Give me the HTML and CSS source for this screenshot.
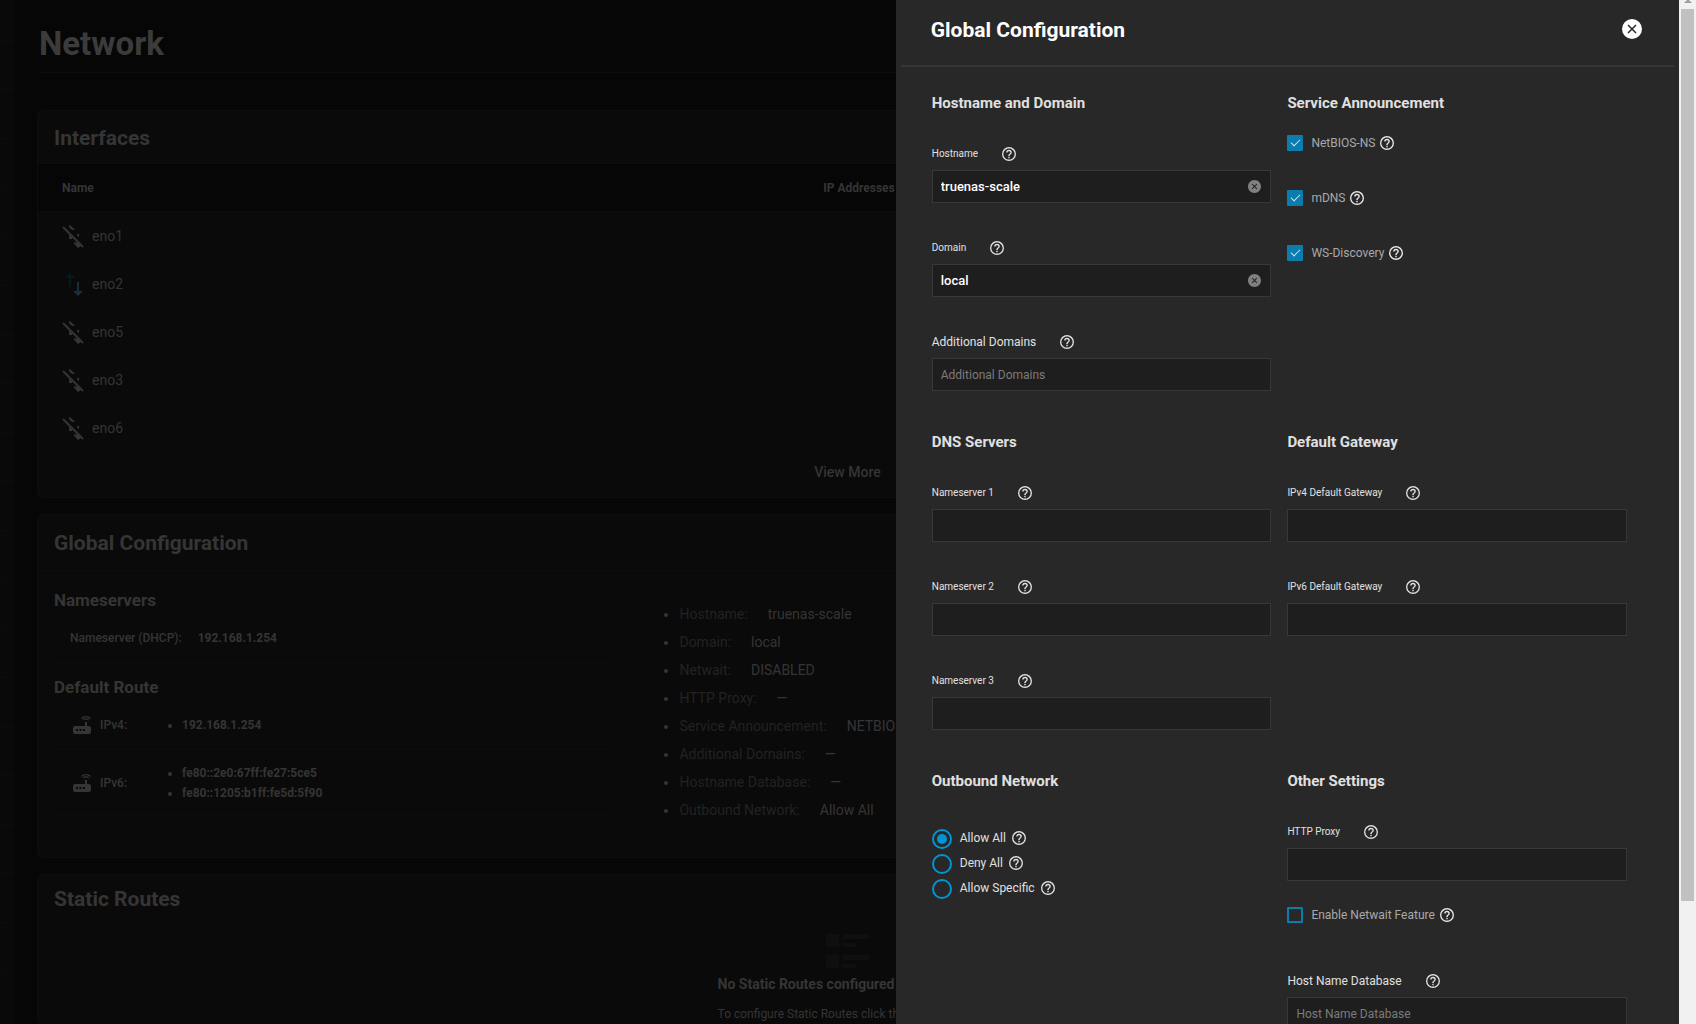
FILE: index.html
```html
<!DOCTYPE html>
<html lang="en">
<head>
    <meta charset="UTF-8">
    <meta name="viewport" content="width=device-width, initial-scale=1.0">
    <title>Network</title>
    <link rel="stylesheet" href="styles.css">
</head>
<body>
    <!-- shared icons -->
    <svg class="icon-defs" aria-hidden="true">
        <symbol id="icon-help" viewBox="2 2 20 20">
            <path d="M11,18H13V16H11V18M12,2A10,10 0 0,0 2,12A10,10 0 0,0 12,22A10,10 0 0,0 22,12A10,10 0 0,0 12,2M12,20C7.59,20 4,16.41 4,12C4,7.59 7.59,4 12,4C16.41,4 20,7.59 20,12C20,16.41 16.41,20 12,20M12,6A4,4 0 0,0 8,10H10A2,2 0 0,1 12,8A2,2 0 0,1 14,10C14,12 11,11.75 11,15H13C13,12.75 16,12.5 16,10A4,4 0 0,0 12,6Z"/>
        </symbol>
        <symbol id="icon-clear" viewBox="2 2 20 20">
            <path d="M12,2C6.47,2 2,6.47 2,12C2,17.53 6.47,22 12,22C17.53,22 22,17.53 22,12C22,6.47 17.53,2 12,2M16.3,15.3L15.3,16.3L12,13L8.7,16.3L7.7,15.3L11,12L7.7,8.7L8.7,7.7L12,11L15.3,7.7L16.3,8.7L13,12L16.3,15.3Z"/>
        </symbol>
        <symbol id="icon-link-off" viewBox="0 0 24 24">
            <path d="M8 1L13 6H10L6.5 2.5ZM7 10.5L10 13.5V15H7ZM15 10H17V13.5L15 11.5ZM11 18.5H15.5L19 22L16 24Z"/>
            <path class="slash" d="M1 3L21 23"/>
        </symbol>
        <symbol id="icon-router" viewBox="0 0 24 24">
            <path d="M20.2,5.9L21,5.1C19.6,3.7 17.8,3 16,3C14.2,3 12.4,3.7 11,5.1L11.8,5.9C13,4.8 14.5,4.2 16,4.2C17.5,4.2 19,4.8 20.2,5.9M19.3,6.7C18.4,5.8 17.2,5.3 16,5.3C14.8,5.3 13.6,5.8 12.7,6.7L13.5,7.5C14.2,6.8 15.1,6.5 16,6.5C16.9,6.5 17.8,6.8 18.5,7.5L19.3,6.7M19,13H17V9H15V13H5A2,2 0 0,0 3,15V19A2,2 0 0,0 5,21H19A2,2 0 0,0 21,19V15A2,2 0 0,0 19,13M8,18H6V16H8V18M11.5,18H9.5V16H11.5V18M15,18H13V16H15V18Z"/>
        </symbol>
    </svg>

    <div class="viewport">
        <!-- side navigation -->
        <nav class="sidenav" aria-label="Main menu"></nav>

        <!-- network page, dimmed while the panel is open -->
        <main class="page">
            <h1 class="page-title">Network</h1>

            <section class="card card-interfaces">
                <h2 class="card-title">Interfaces</h2>
                <table class="interfaces">
                    <thead>
                        <tr><th>Name</th><th>IP Addresses</th></tr>
                    </thead>
                    <tbody>
                        <tr><td><span class="iface"><svg class="icon"><use href="#icon-link-off"/></svg>eno1</span></td><td></td></tr>
                        <tr><td><span class="iface"><svg class="icon" viewBox="0 0 24 24"><path class="arrow-up" d="M8 1L3 6H7V15H9V6H13Z"/><path class="arrow-down" d="M16 24L11 19H15V10H17V19H21Z"/></svg>eno2</span></td><td></td></tr>
                        <tr><td><span class="iface"><svg class="icon"><use href="#icon-link-off"/></svg>eno5</span></td><td></td></tr>
                        <tr><td><span class="iface"><svg class="icon"><use href="#icon-link-off"/></svg>eno3</span></td><td></td></tr>
                        <tr><td><span class="iface"><svg class="icon"><use href="#icon-link-off"/></svg>eno6</span></td><td></td></tr>
                    </tbody>
                </table>
                <button class="view-more" type="button">View More</button>
            </section>

            <section class="card card-config">
                <h2 class="card-title">Global Configuration</h2>
                <div class="config">
                    <div class="config-left">
                        <h3>Nameservers</h3>
                        <div class="ns-row"><span>Nameserver (DHCP):</span><b>192.168.1.254</b></div>
                        <h3>Default Route</h3>
                        <div class="route">
                            <svg class="icon"><use href="#icon-router"/></svg>
                            <span class="route-name">IPv4:</span>
                            <ul><li>192.168.1.254</li></ul>
                        </div>
                        <div class="route route-tall">
                            <svg class="icon"><use href="#icon-router"/></svg>
                            <span class="route-name">IPv6:</span>
                            <ul><li>fe80::2e0:67ff:fe27:5ce5</li><li>fe80::1205:b1ff:fe5d:5f90</li></ul>
                        </div>
                    </div>
                    <ul class="config-list">
                        <li><span>Hostname:</span>truenas-scale</li>
                        <li><span>Domain:</span>local</li>
                        <li><span>Netwait:</span>DISABLED</li>
                        <li><span>HTTP Proxy:</span>—</li>
                        <li><span>Service Announcement:</span>NETBIOS-NS, mDNS, WS-DISCOVERY</li>
                        <li><span>Additional Domains:</span>—</li>
                        <li><span>Hostname Database:</span>—</li>
                        <li><span>Outbound Network:</span>Allow All</li>
                    </ul>
                </div>
            </section>

            <section class="card card-routes">
                <h2 class="card-title">Static Routes</h2>
                <div class="empty">
                    <svg class="empty-icon" viewBox="0 0 43 34"><path d="M0 0h13v13H0zM17 0h26v5H17zM17 9h13v4H17zM0 21h13v13H0zM17 21h26v5H17zM17 30h13v4H17z"/></svg>
                    <div class="empty-text">
                        <h3>No Static Routes configured</h3>
                        <p>To configure Static Routes click the "Add" button.</p>
                    </div>
                </div>
            </section>
        </main>

        <!-- slide-in panel -->
        <aside class="panel">
            <header class="panel-header">
                <h2>Global Configuration</h2>
                <button class="close" type="button" aria-label="Close">
                    <svg viewBox="0 0 20 20"><path d="M6 6L14 14M14 6L6 14"/></svg>
                </button>
            </header>

            <form class="panel-form">
                <fieldset>
                    <legend>Hostname and Domain</legend>
                    <div class="field">
                        <div class="field-label"><label for="hostname">Hostname</label><button class="help" type="button" aria-label="Help"><svg><use href="#icon-help"/></svg></button></div>
                        <div class="field-box">
                            <input id="hostname" type="text" value="truenas-scale">
                            <button class="clear" type="button" aria-label="Clear"><svg><use href="#icon-clear"/></svg></button>
                        </div>
                    </div>
                    <div class="field">
                        <div class="field-label"><label for="domain">Domain</label><button class="help" type="button" aria-label="Help"><svg><use href="#icon-help"/></svg></button></div>
                        <div class="field-box">
                            <input id="domain" type="text" value="local">
                            <button class="clear" type="button" aria-label="Clear"><svg><use href="#icon-clear"/></svg></button>
                        </div>
                    </div>
                    <div class="field">
                        <div class="field-label large"><label for="domains">Additional Domains</label><button class="help" type="button" aria-label="Help"><svg><use href="#icon-help"/></svg></button></div>
                        <div class="field-box"><input id="domains" type="text" placeholder="Additional Domains"></div>
                    </div>
                </fieldset>

                <fieldset>
                    <legend class="short">Service Announcement</legend>
                    <div class="check"><input id="netbios" type="checkbox" checked><label for="netbios">NetBIOS-NS</label><button class="help" type="button" aria-label="Help"><svg><use href="#icon-help"/></svg></button></div>
                    <div class="check"><input id="mdns" type="checkbox" checked><label for="mdns">mDNS</label><button class="help" type="button" aria-label="Help"><svg><use href="#icon-help"/></svg></button></div>
                    <div class="check"><input id="wsd" type="checkbox" checked><label for="wsd">WS-Discovery</label><button class="help" type="button" aria-label="Help"><svg><use href="#icon-help"/></svg></button></div>
                </fieldset>

                <fieldset>
                    <legend>DNS Servers</legend>
                    <div class="field">
                        <div class="field-label"><label for="ns1">Nameserver 1</label><button class="help" type="button" aria-label="Help"><svg><use href="#icon-help"/></svg></button></div>
                        <div class="field-box"><input id="ns1" type="text"></div>
                    </div>
                    <div class="field">
                        <div class="field-label"><label for="ns2">Nameserver 2</label><button class="help" type="button" aria-label="Help"><svg><use href="#icon-help"/></svg></button></div>
                        <div class="field-box"><input id="ns2" type="text"></div>
                    </div>
                    <div class="field">
                        <div class="field-label"><label for="ns3">Nameserver 3</label><button class="help" type="button" aria-label="Help"><svg><use href="#icon-help"/></svg></button></div>
                        <div class="field-box"><input id="ns3" type="text"></div>
                    </div>
                </fieldset>

                <fieldset>
                    <legend>Default Gateway</legend>
                    <div class="field">
                        <div class="field-label"><label for="gw4">IPv4 Default Gateway</label><button class="help" type="button" aria-label="Help"><svg><use href="#icon-help"/></svg></button></div>
                        <div class="field-box"><input id="gw4" type="text"></div>
                    </div>
                    <div class="field">
                        <div class="field-label"><label for="gw6">IPv6 Default Gateway</label><button class="help" type="button" aria-label="Help"><svg><use href="#icon-help"/></svg></button></div>
                        <div class="field-box"><input id="gw6" type="text"></div>
                    </div>
                </fieldset>

                <fieldset>
                    <legend>Outbound Network</legend>
                    <div class="radios">
                        <div class="radio"><input id="allow-all" type="radio" name="outbound" checked><label for="allow-all">Allow All</label><button class="help" type="button" aria-label="Help"><svg><use href="#icon-help"/></svg></button></div>
                        <div class="radio"><input id="deny-all" type="radio" name="outbound"><label for="deny-all">Deny All</label><button class="help" type="button" aria-label="Help"><svg><use href="#icon-help"/></svg></button></div>
                        <div class="radio"><input id="allow-specific" type="radio" name="outbound"><label for="allow-specific">Allow Specific</label><button class="help" type="button" aria-label="Help"><svg><use href="#icon-help"/></svg></button></div>
                    </div>
                </fieldset>

                <fieldset>
                    <legend>Other Settings</legend>
                    <div class="field tight">
                        <div class="field-label"><label for="proxy">HTTP Proxy</label><button class="help" type="button" aria-label="Help"><svg><use href="#icon-help"/></svg></button></div>
                        <div class="field-box"><input id="proxy" type="text"></div>
                    </div>
                    <div class="check netwait"><input id="netwait" type="checkbox"><label for="netwait">Enable Netwait Feature</label><button class="help" type="button" aria-label="Help"><svg><use href="#icon-help"/></svg></button></div>
                    <div class="field">
                        <div class="field-label large"><label for="hosts">Host Name Database</label><button class="help" type="button" aria-label="Help"><svg><use href="#icon-help"/></svg></button></div>
                        <div class="field-box"><input id="hosts" type="text" placeholder="Host Name Database"></div>
                    </div>
                </fieldset>
            </form>
        </aside>
    </div>

    <!-- scrollbar -->
    <div class="scrollbar" aria-hidden="true">
        <svg class="scroll-up" viewBox="0 0 8 3"><path d="M3 0H5L8 3H0Z"/></svg>
        <div class="scroll-thumb"></div>
    </div>
</body>
</html>
```

FILE: styles.css
```css
* {
    box-sizing: border-box;
}

body {
    margin: 0;
    display: flex;
    height: 100vh;
    overflow: hidden;
    background: #060606;
    color: #353535;
    font-family: Roboto, "Liberation Sans", sans-serif;
    font-size: 12px;
    line-height: 20px;
}

h1, h2, h3, p, ul {
    margin: 0;
}

button {
    padding: 0;
    border: 0;
    background: none;
    color: inherit;
    font: inherit;
    cursor: pointer;
}

svg {
    display: block;
    fill: currentColor;
}

.icon-defs {
    position: absolute;
    width: 0;
    height: 0;
}

.icon {
    width: 24px;
    height: 24px;
    flex: none;
}

.viewport {
    position: relative;
    display: flex;
    flex: 1;
    min-width: 0;
    overflow: hidden;
}

/* side navigation */
.sidenav {
    width: 15px;
    flex: none;
    background: repeating-linear-gradient(#090909 0 48px, #0c0c0c 48px 49px);
    background-position: 0 -8px;
}

/* page */
.page {
    flex: 1;
    min-width: 0;
    padding: 0 21px 0 22px;
}

.page-title {
    height: 73px;
    margin: 0 0 37px 2px;
    padding-top: 24px;
    border-bottom: 1px solid #0d0d0d;
    color: #3b3b3b;
    font-size: 33px;
    line-height: 40px;
}

.card {
    margin-bottom: 16px;
    border: 1px solid #0d0d0d;
    border-radius: 5px;
    background: #0a0a0a;
}

.card-title {
    padding: 14px 16px 12px;
    border-bottom: 1px solid #0d0d0d;
    font-size: 21px;
    line-height: 26px;
}

.card-config .card-title {
    padding: 15px 16px 14px;
}

.card-routes .card-title {
    padding: 11px 16px;
}

/* interfaces table */
.interfaces {
    width: 100%;
    border-spacing: 0;
}

.interfaces th,
.interfaces td {
    height: 48px;
    padding: 0;
    border-bottom: 1px solid #0d0d0d;
    text-align: left;
}

.interfaces th {
    background: #060606;
}

.interfaces th:first-child,
.interfaces td:first-child {
    width: 48.5%;
    padding-left: 24px;
}

.iface {
    display: flex;
    align-items: center;
    gap: 6px;
    font-size: 14px;
}

.slash {
    fill: none;
    stroke: currentColor;
    stroke-width: 2;
}

.arrow-up {
    fill: #06191f;
}

.arrow-down {
    fill: #17303c;
}

.view-more {
    display: block;
    width: 100%;
    height: 45px;
    padding-bottom: 5px;
    font-size: 14px;
    font-weight: 500;
}

/* global configuration card */
.config {
    display: flex;
    padding: 16px;
    height: 286px;
}

.config-left {
    width: 35%;
}

.config h3 {
    font-size: 17px;
    line-height: 26px;
}

.ns-row {
    display: flex;
    align-items: center;
    gap: 16px;
    height: 51px;
    margin-bottom: 10px;
    padding-left: 16px;
    border-bottom: 1px solid #0d0d0d;
}

.ns-row span,
.route-name {
    font-weight: 500;
}

.route {
    display: flex;
    align-items: center;
    gap: 6px;
    height: 50px;
    padding-left: 16px;
    border-bottom: 1px solid #0d0d0d;
}

.route-tall {
    height: 66px;
}

.route-name {
    width: 36px;
}

.route ul {
    padding-left: 40px;
    font-weight: 700;
}

.config-list {
    padding: 13px 0 0 70px;
    font-size: 14px;
    line-height: 28px;
}

.config-list span {
    margin-right: 20px;
    color: #222222;
}

/* static routes */
.empty {
    display: flex;
    flex-direction: column;
    align-items: center;
    padding-top: 10px;
}

.empty-icon {
    width: 43px;
    height: 34px;
    color: #0f0f0f;
}

.empty-text h3 {
    margin: 6px 0 10px;
    font-size: 14px;
}

/* slide-in panel */
.panel {
    position: absolute;
    top: 0;
    right: 0;
    bottom: 0;
    width: 46.65%;
    overflow: hidden;
    background: #282828;
    color: #e0e0e0;
}

.panel-header {
    display: flex;
    align-items: center;
    justify-content: space-between;
    height: 67px;
    margin: 0 5px;
    padding: 0 32px 7px 30px;
    border-bottom: 2px solid #353535;
}

.panel-header h2 {
    padding-top: 1px;
    color: #ffffff;
    font-size: 21px;
    line-height: 26px;
}

.close {
    width: 20px;
    height: 20px;
    border-radius: 50%;
    background: #ffffff;
    color: #282828;
}

.close svg {
    fill: none;
    stroke: currentColor;
    stroke-width: 1.5;
}

.panel-form {
    display: grid;
    grid-template-columns: 1fr 1fr;
    column-gap: 16px;
    row-gap: 8px;
    padding: 26px 52px 0 36px;
}

fieldset {
    min-width: 0;
    margin: 0;
    padding: 0;
    border: 0;
}

legend {
    margin-bottom: 29px;
    padding: 0;
    font-size: 15px;
    font-weight: 700;
    line-height: 20px;
}

legend.short {
    margin-bottom: 18px;
}

.field {
    margin-bottom: 33px;
}

.field.tight {
    margin-bottom: 22px;
}

.field-label {
    display: flex;
    align-items: center;
    gap: 24px;
    height: 24px;
    margin-bottom: 4px;
    font-size: 10px;
}

.field-label.large {
    font-size: 12px;
}

.help svg {
    width: 14px;
    height: 14px;
}

.field-box {
    display: flex;
    align-items: center;
    height: 33px;
    padding: 0 9px 0 8px;
    border: 1px solid #383838;
    background: #1e1e1e;
}

.field-box input {
    flex: 1;
    min-width: 0;
    padding: 0;
    border: 0;
    outline: 0;
    background: none;
    color: #ffffff;
    font: 500 13px/20px Roboto, "Liberation Sans", sans-serif;
}

.field-box input::placeholder {
    color: #7b7b7b;
    font-size: 12px;
    font-weight: 400;
}

.clear {
    color: #808080;
}

.clear svg {
    width: 13px;
    height: 13px;
}

/* check boxes and radios */
.check {
    display: flex;
    align-items: center;
    height: 24px;
    margin-bottom: 31px;
    color: #a9a9a9;
}

.check.netwait {
    margin-bottom: 42px;
}

.check input {
    appearance: none;
    width: 16px;
    height: 16px;
    margin: 0 8px 0 0;
    border: 2px solid #0b7cae;
    border-radius: 1px;
}

.check input:checked {
    display: grid;
    place-items: center;
    background: #0b7cae;
}

.check input:checked::before {
    content: "";
    width: 8px;
    height: 4px;
    margin-bottom: 3px;
    border-left: 1px solid #cfe3ec;
    border-bottom: 1px solid #cfe3ec;
    transform: rotate(-45deg);
}

.check .help {
    margin-left: 5px;
    color: #e8e8e8;
}

.radios {
    display: flex;
    flex-direction: column;
    gap: 5px;
    padding-top: 9px;
}

.radio {
    display: flex;
    align-items: center;
    height: 20px;
}

.radio input {
    appearance: none;
    display: grid;
    place-items: center;
    width: 20px;
    height: 20px;
    margin: 0 8px 0 0;
    border: 2px solid #0095d5;
    border-radius: 50%;
}

.radio input:checked::before {
    content: "";
    width: 10px;
    height: 10px;
    border-radius: 50%;
    background: #0095d5;
}

.radio label,
.radio .help {
    padding-bottom: 2px;
}

.radio .help {
    margin-left: 6px;
}

/* scrollbar */
.scrollbar {
    display: flex;
    flex-direction: column;
    width: 17px;
    flex: none;
    padding: 0 2px;
    background: #f1f1f1;
}

.scroll-up {
    width: 8px;
    height: 3px;
    margin: 0 auto 6px;
    color: #a0a0a0;
}

.scroll-thumb {
    height: 87.1%;
    background: #c1c1c1;
}
```
